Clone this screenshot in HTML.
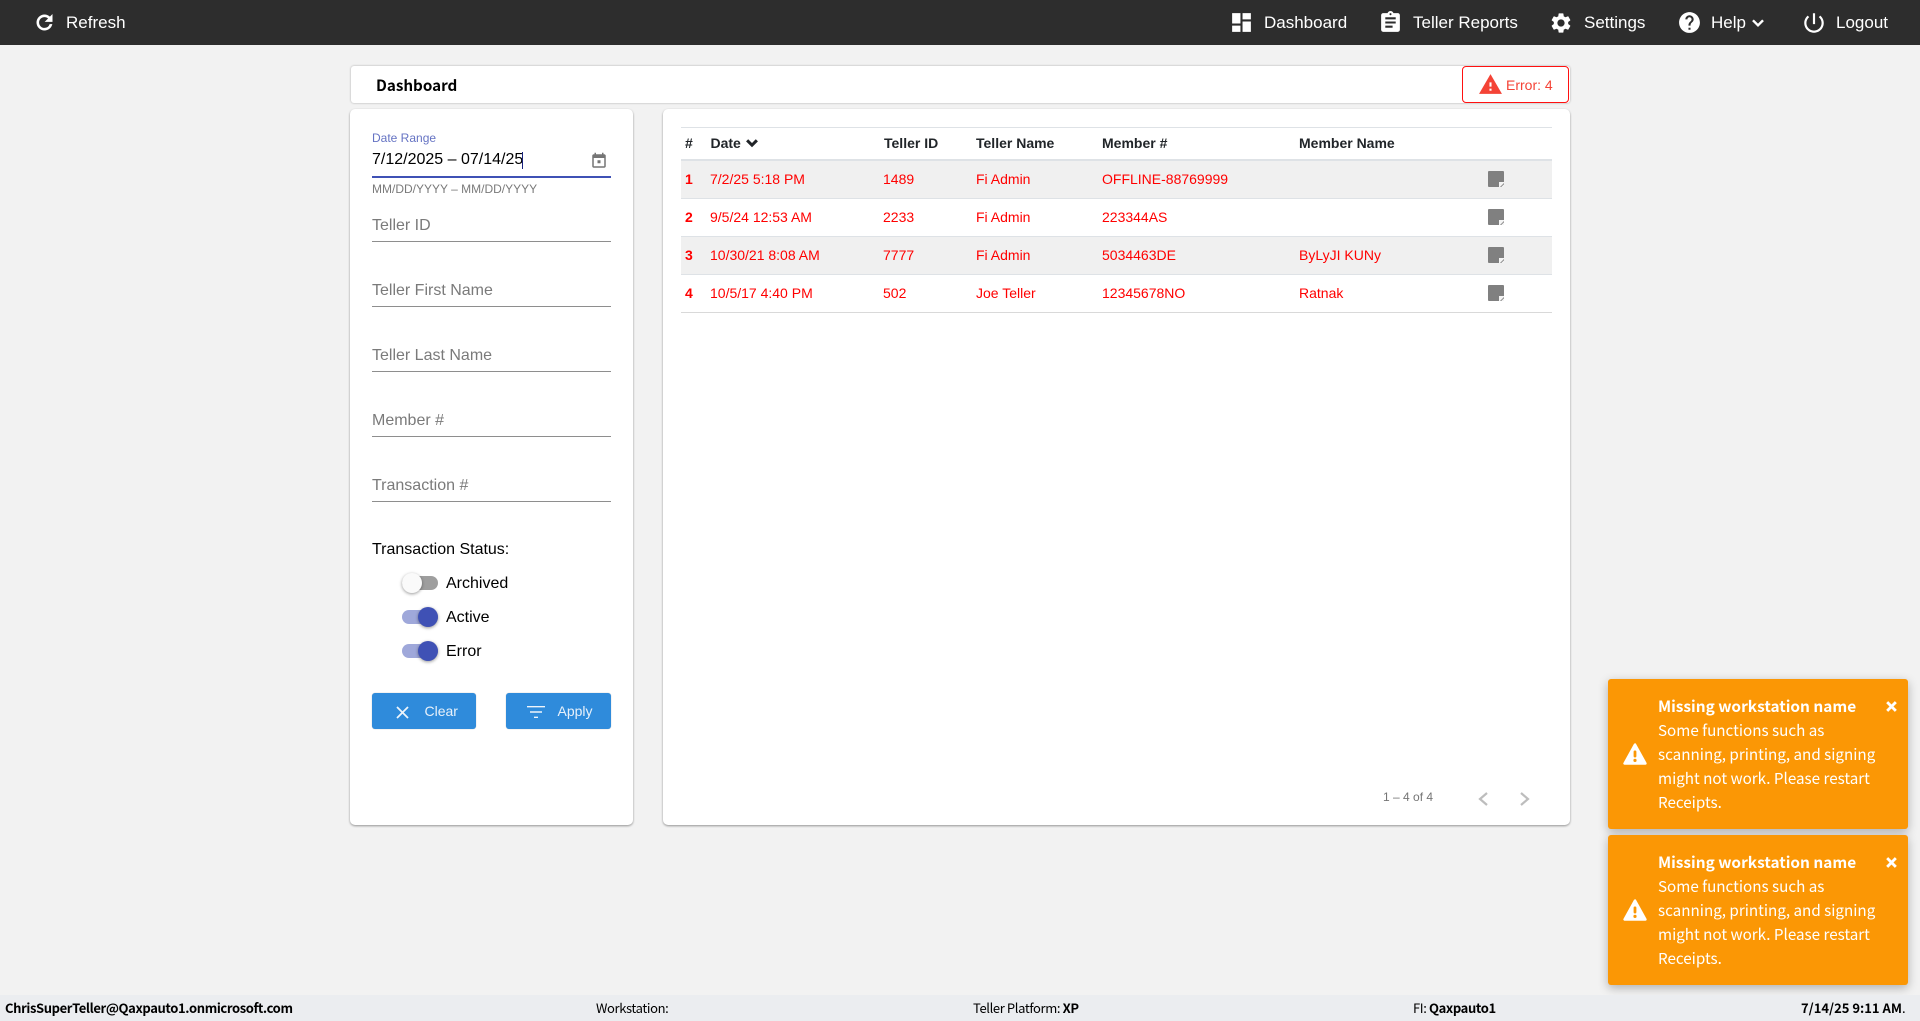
<!DOCTYPE html>
<html><head><meta charset="utf-8"><title>Dashboard</title>
<style>
*{box-sizing:border-box}
html,body{margin:0;padding:0;width:1920px;height:1021px;overflow:hidden;background:#f2f2f2;font-family:"Liberation Sans",Arial,sans-serif}
.a{position:absolute;white-space:nowrap}
svg{position:absolute;display:block}
.nav{color:#fff;font-size:17px;line-height:20px;top:13px}
.card{position:absolute;background:#fff;border-radius:5px;box-shadow:0 1px 2px rgba(0,0,0,.4)}
.ph{color:#7a7a7a;font-size:16px;line-height:20px;left:372px}
.ul{position:absolute;left:372px;width:239px;height:1px;background:#8e8e8e}
.lb{color:#000;font-size:16px;line-height:20px}
.tr{position:absolute;width:36px;height:14px;border-radius:7px;left:402px}
.th{position:absolute;width:20px;height:20px;border-radius:50%;box-shadow:0 1px 3px rgba(0,0,0,.4)}
.btn{position:absolute;top:693px;height:36px;background:#2f8bdb;border-radius:3px;box-shadow:0 0 1px rgba(0,0,0,.3)}
.h{font-size:14px;font-weight:bold;color:#212529;line-height:18px;top:134px}
.c{font-size:14px;color:#f00;line-height:18px}
.hl{position:absolute;left:681px;width:871px;background:#dee2e6}
.z{position:absolute;left:681px;width:871px;height:37px;background:#f0f0f0}
.note{position:absolute;left:1488px;width:16px;height:16px;background:#808080;border-radius:1px}
.note i{position:absolute;right:0;bottom:0;width:5px;height:5px;background:#f4f4f4}
.note b{position:absolute;right:0;bottom:0;width:4px;height:4px;background:#808080;clip-path:polygon(100% 0,100% 30%,30% 100%,0 100%)}
.toast{position:absolute;left:1608px;width:300px;height:150px;background:#fb9705;border-radius:3px;box-shadow:0 3px 10px rgba(0,0,0,.28)}
.toast div{position:absolute;left:50px;top:15px;color:#fff;font-family:"Noto Sans CJK SC","Liberation Sans",sans-serif;font-size:15.2px;line-height:24px;white-space:nowrap}
.toast b{font-weight:700;font-size:15.4px}
.foot{font-family:"Noto Sans CJK SC","Liberation Sans",sans-serif;font-size:13px;line-height:18px;color:#000;top:999px;letter-spacing:-.38px}
.foot b{font-weight:700}
</style></head><body>

<div class="a" style="left:0;top:0;width:1920px;height:45px;background:#2d2d2d"></div>
<svg style="left:33px;top:11px" width="23" height="23" viewBox="0 0 24 24" fill="#fff"><path stroke="#fff" stroke-width=".7" d="M17.65 6.35C16.2 4.9 14.21 4 12 4c-4.42 0-7.99 3.58-7.99 8s3.57 8 7.99 8c3.73 0 6.84-2.55 7.73-6h-2.08c-.82 2.33-3.04 4-5.65 4-3.31 0-6-2.69-6-6s2.69-6 6-6c1.66 0 3.14.69 4.22 1.78L13 11h7V4l-2.35 2.35z"/></svg>
<div class="a nav" style="left:66px">Refresh</div>

<svg style="left:1229px;top:10px" width="25" height="25" viewBox="0 0 24 24" fill="#fff"><path d="M3 13h8V3H3v10zm0 8h8v-6H3v6zm10 0h8V11h-8v10zm0-18v6h8V3h-8z"/></svg>
<div class="a nav" style="left:1264px">Dashboard</div>
<svg style="left:1378px;top:10px" width="25" height="25" viewBox="0 0 24 24" fill="#fff"><path d="M19 3h-4.18C14.4 1.84 13.3 1 12 1c-1.3 0-2.4.84-2.82 2H5c-1.1 0-2 .9-2 2v14c0 1.1.9 2 2 2h14c1.1 0 2-.9 2-2V5c0-1.1-.9-2-2-2zm-7 0c.55 0 1 .45 1 1s-.45 1-1 1-1-.45-1-1 .45-1 1-1zm2 14H7v-2h7v2zm3-4H7v-2h10v2zm0-4H7V7h10v2z"/></svg>
<div class="a nav" style="left:1413px">Teller Reports</div>
<svg style="left:1549px;top:11px" width="24" height="24" viewBox="0 0 24 24" fill="#fff"><path d="M19.14,12.94c0.04-0.3,0.06-0.61,0.06-0.94c0-0.32-0.02-0.64-0.07-0.94l2.03-1.58c0.18-0.14,0.23-0.41,0.12-0.61 l-1.92-3.32c-0.12-0.22-0.37-0.29-0.59-0.22l-2.39,0.96c-0.5-0.38-1.03-0.7-1.62-0.94L14.4,2.81c-0.04-0.24-0.24-0.41-0.48-0.41 h-3.84c-0.24,0-0.43,0.17-0.47,0.41L9.25,5.35C8.66,5.59,8.12,5.92,7.63,6.29L5.24,5.33c-0.22-0.08-0.47,0-0.59,0.22L2.74,8.87 C2.62,9.08,2.66,9.34,2.86,9.48l2.03,1.58C4.84,11.36,4.8,11.69,4.8,12s0.02,0.64,0.07,0.94l-2.03,1.58 c-0.18,0.14-0.23,0.41-0.12,0.61l1.92,3.32c0.12,0.22,0.37,0.29,0.59,0.22l2.39-0.96c0.5,0.38,1.03,0.7,1.62,0.94l0.36,2.54 c0.05,0.24,0.24,0.41,0.48,0.41h3.84c0.24,0,0.44-0.17,0.47-0.41l0.36-2.54c0.59-0.24,1.13-0.56,1.62-0.94l2.39,0.96 c0.22,0.08,0.47,0,0.59-0.22l1.92-3.32c0.12-0.22,0.07-0.47-0.12-0.61L19.14,12.94z M12,15.6c-1.98,0-3.6-1.62-3.6-3.6 s1.62-3.6,3.6-3.6s3.6,1.62,3.6,3.6S13.98,15.6,12,15.6z"/></svg>
<div class="a nav" style="left:1584px">Settings</div>
<svg style="left:1677px;top:10px" width="25" height="25" viewBox="0 0 24 24" fill="#fff"><path d="M12 2C6.48 2 2 6.48 2 12s4.48 10 10 10 10-4.48 10-10S17.52 2 12 2zm1 17h-2v-2h2v2zm2.07-7.75l-.9.92C13.45 12.9 13 13.5 13 15h-2v-.5c0-1.1.45-2.1 1.17-2.83l1.24-1.26c.37-.36.59-.86.59-1.41 0-1.1-.9-2-2-2s-2 .9-2 2H8c0-2.21 1.79-4 4-4s4 1.79 4 4c0 .88-.36 1.68-.93 2.25z"/></svg>
<div class="a nav" style="left:1711px">Help</div>
<svg style="left:1747px;top:12px" width="22" height="22" viewBox="0 0 24 24" fill="#fff"><path d="M16.59 8.59L12 13.17 7.41 8.59 6 10l6 6 6-6z" stroke="#fff" stroke-width=".6"/></svg>
<svg style="left:1801px;top:10px" width="26" height="26" viewBox="0 0 24 24" fill="#fff"><path d="M13 3h-2v10h2V3zm4.83 2.17l-1.42 1.42C17.99 7.86 19 9.81 19 12c0 3.87-3.13 7-7 7s-7-3.13-7-7c0-2.19 1.01-4.14 2.58-5.42L6.17 5.17C4.23 6.82 3 9.26 3 12c0 4.97 4.03 9 9 9s9-4.03 9-9c0-2.74-1.23-5.18-3.17-6.83z"/></svg>
<div class="a nav" style="left:1836px">Logout</div>

<!-- title bar -->
<div class="card" style="left:351px;top:66px;width:1219px;height:37px;border-radius:3px;box-shadow:0 0 2px rgba(0,0,0,.3)"></div>
<div class="a" style="left:376px;top:75px;font-family:'Noto Sans CJK SC','Liberation Sans',sans-serif;font-weight:700;font-size:15.2px;line-height:21px;color:#000">Dashboard</div>
<div class="a" style="left:1462px;top:66px;width:107px;height:37px;background:#fff;border:1.5px solid #f11;border-radius:4px"></div>
<svg style="left:1478px;top:72px" width="25" height="25" viewBox="0 0 24 24" fill="#f44336"><path d="M1 21h22L12 2 1 21zm12-3h-2v-2h2v2zm0-4h-2v-4h2v4z"/></svg>
<div class="a" style="left:1506px;top:76px;font-size:14px;line-height:18px;color:#f44336">Error: 4</div>

<!-- filter panel -->
<div class="card" style="left:350px;top:109px;width:283px;height:716px"></div>
<div class="a" style="left:372px;top:130px;font-size:12px;line-height:16px;color:#6573c3">Date Range</div>
<div class="a" style="left:372px;top:150px;font-size:16px;line-height:20px;color:#000">7/12/2025 – 07/14/25</div>
<div class="a" style="left:522px;top:152px;width:1px;height:17px;background:#1a237e"></div>
<svg style="left:590px;top:152px" width="18" height="18" viewBox="0 0 24 24" fill="#757575"><path d="M19 3h-1V1h-2v2H8V1H6v2H5c-1.11 0-2 .9-2 2v14c0 1.1.89 2 2 2h14c1.1 0 2-.9 2-2V5c0-1.1-.9-2-2-2zm0 16H5V8h14v11zM10 11h4v4h-4z"/></svg>
<div class="a" style="left:372px;top:176px;width:239px;height:2px;background:#3f51b5"></div>
<div class="a" style="left:372px;top:181px;font-size:12px;line-height:16px;color:#7a7a7a">MM/DD/YYYY – MM/DD/YYYY</div>

<div class="a ph" style="top:216px">Teller ID</div><div class="ul" style="top:241px"></div>
<div class="a ph" style="top:281px">Teller First Name</div><div class="ul" style="top:306px"></div>
<div class="a ph" style="top:346px">Teller Last Name</div><div class="ul" style="top:371px"></div>
<div class="a ph" style="top:411px">Member #</div><div class="ul" style="top:436px"></div>
<div class="a ph" style="top:476px">Transaction #</div><div class="ul" style="top:501px"></div>

<div class="a lb" style="left:372px;top:540px">Transaction Status:</div>
<div class="tr" style="top:576px;background:#9e9e9e"></div><div class="th" style="left:402px;top:573px;background:#fafafa"></div>
<div class="a lb" style="left:446px;top:574px">Archived</div>
<div class="tr" style="top:610px;background:#9fa8da"></div><div class="th" style="left:418px;top:607px;background:#3f51b5"></div>
<div class="a lb" style="left:446px;top:608px">Active</div>
<div class="tr" style="top:644px;background:#9fa8da"></div><div class="th" style="left:418px;top:641px;background:#3f51b5"></div>
<div class="a lb" style="left:446px;top:642px">Error</div>

<div class="btn" style="left:372px;width:104px"></div>
<svg style="left:392px;top:702px" width="21" height="21" viewBox="0 0 24 24" fill="#eef5fb"><path d="M19 6.41L17.59 5 12 10.59 6.41 5 5 6.41 10.59 12 5 17.59 6.41 19 12 13.41 17.59 19 19 17.59 13.41 12z"/></svg>
<div class="a" style="left:424.5px;top:702px;font-size:14px;line-height:18px;color:#e8f1fa">Clear</div>
<div class="btn" style="left:506px;width:105px"></div>
<svg style="left:524px;top:700px" width="24" height="24" viewBox="0 0 24 24" fill="#eef5fb"><path d="M10 18h4v-1.4h-4v1.4zM3 6v1.4h18V6H3zm3 6.7h12v-1.4H6v1.4z"/></svg>
<div class="a" style="left:557.5px;top:702px;font-size:14px;line-height:18px;color:#e8f1fa">Apply</div>

<!-- table panel -->
<div class="card" style="left:663px;top:109px;width:907px;height:716px"></div>
<div class="hl" style="top:127px;height:1px"></div>
<div class="h a" style="left:685px">#</div>
<div class="h a" style="left:710.5px">Date</div>
<svg style="left:742px;top:132px" width="20" height="22" viewBox="0 0 24 24" fill="#212529"><path d="M16.59 8.59L12 13.17 7.41 8.59 6 10l6 6 6-6z" stroke="#212529" stroke-width="1.6"/></svg>
<div class="h a" style="left:884px">Teller ID</div>
<div class="h a" style="left:976px">Teller Name</div>
<div class="h a" style="left:1102px">Member #</div>
<div class="h a" style="left:1299px">Member Name</div>
<div class="hl" style="top:159px;height:2px"></div>

<div class="z" style="top:161px"></div>
<div class="z" style="top:237px"></div>
<div class="hl" style="top:198px;height:1px"></div>
<div class="hl" style="top:236px;height:1px"></div>
<div class="hl" style="top:274px;height:1px"></div>
<div class="hl" style="top:312px;height:1px;background:#d9d9d9"></div>

<div class="c a" style="left:685px;top:170px;font-weight:bold">1</div>
<div class="c a" style="left:710px;top:170px">7/2/25 5:18 PM</div>
<div class="c a" style="left:883px;top:170px">1489</div>
<div class="c a" style="left:976px;top:170px">Fi Admin</div>
<div class="c a" style="left:1102px;top:170px">OFFLINE-88769999</div>
<div class="note" style="top:171px"><i></i><b></b></div>

<div class="c a" style="left:685px;top:208px;font-weight:bold">2</div>
<div class="c a" style="left:710px;top:208px">9/5/24 12:53 AM</div>
<div class="c a" style="left:883px;top:208px">2233</div>
<div class="c a" style="left:976px;top:208px">Fi Admin</div>
<div class="c a" style="left:1102px;top:208px">223344AS</div>
<div class="note" style="top:209px"><i></i><b></b></div>

<div class="c a" style="left:685px;top:246px;font-weight:bold">3</div>
<div class="c a" style="left:710px;top:246px">10/30/21 8:08 AM</div>
<div class="c a" style="left:883px;top:246px">7777</div>
<div class="c a" style="left:976px;top:246px">Fi Admin</div>
<div class="c a" style="left:1102px;top:246px">5034463DE</div>
<div class="c a" style="left:1299px;top:246px">ByLyJI KUNy</div>
<div class="note" style="top:247px"><i></i><b></b></div>

<div class="c a" style="left:685px;top:284px;font-weight:bold">4</div>
<div class="c a" style="left:710px;top:284px">10/5/17 4:40 PM</div>
<div class="c a" style="left:883px;top:284px">502</div>
<div class="c a" style="left:976px;top:284px">Joe Teller</div>
<div class="c a" style="left:1102px;top:284px">12345678NO</div>
<div class="c a" style="left:1299px;top:284px">Ratnak</div>
<div class="note" style="top:285px"><i></i><b></b></div>

<div class="a" style="left:1383px;top:789px;font-size:12px;line-height:16px;color:#757575">1 – 4 of 4</div>
<svg style="left:1476px;top:790px" width="16" height="18" viewBox="0 0 16 18" fill="none" stroke="#bdbdbd" stroke-width="2.2"><path d="M11 3l-7 6 7 6"/></svg>
<svg style="left:1516px;top:790px" width="16" height="18" viewBox="0 0 16 18" fill="none" stroke="#bdbdbd" stroke-width="2.2"><path d="M5 3l7 6-7 6"/></svg>

<!-- toasts -->
<div class="toast" style="top:679px">
<svg style="left:14px;top:62px" width="26" height="26" viewBox="0 0 26 26"><path d="M13 3.5L2.5 22.5h21z" fill="#fff" stroke="#fff" stroke-width="2.4" stroke-linejoin="round"/><rect x="11.6" y="9.5" width="2.8" height="7" rx="1.2" fill="#fb9705"/><circle cx="13" cy="19.4" r="1.6" fill="#fb9705"/></svg>
<div><b>Missing workstation name</b><br>Some functions such as<br>scanning, printing, and signing<br>might not work. Please restart<br>Receipts.</div>
<svg style="left:277px;top:21px" width="13" height="13" viewBox="0 0 12 12" stroke="#fff" stroke-width="2.6"><path d="M2 2l8 8M10 2l-8 8"/></svg>
</div>
<div class="toast" style="top:835px">
<svg style="left:14px;top:62px" width="26" height="26" viewBox="0 0 26 26"><path d="M13 3.5L2.5 22.5h21z" fill="#fff" stroke="#fff" stroke-width="2.4" stroke-linejoin="round"/><rect x="11.6" y="9.5" width="2.8" height="7" rx="1.2" fill="#fb9705"/><circle cx="13" cy="19.4" r="1.6" fill="#fb9705"/></svg>
<div><b>Missing workstation name</b><br>Some functions such as<br>scanning, printing, and signing<br>might not work. Please restart<br>Receipts.</div>
<svg style="left:277px;top:21px" width="13" height="13" viewBox="0 0 12 12" stroke="#fff" stroke-width="2.6"><path d="M2 2l8 8M10 2l-8 8"/></svg>
</div>

<!-- footer -->
<div class="a" style="left:0;top:995px;width:1920px;height:26px;background:#ebedf0"></div>
<div class="a foot" style="left:5px"><b>ChrisSuperTeller@Qaxpauto1.onmicrosoft.com</b></div>
<div class="a foot" style="left:596px">Workstation:</div>
<div class="a foot" style="left:973px">Teller Platform: <b>XP</b></div>
<div class="a foot" style="left:1413px">FI: <b>Qaxpauto1</b></div>
<div class="a foot" style="left:1801px;letter-spacing:0"><b>7/14/25 9:11 AM</b>.</div>
</body></html>
